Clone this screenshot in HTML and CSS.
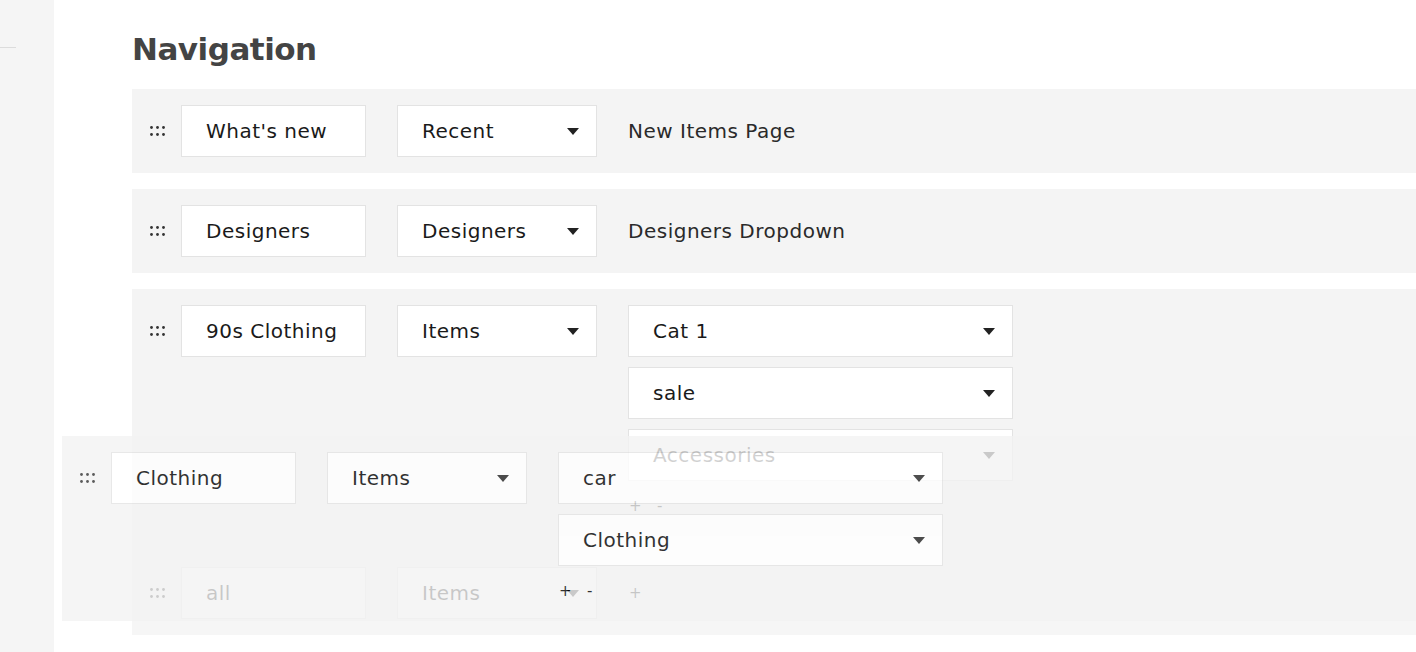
FILE: index.html
```html
<!DOCTYPE html>
<html lang="en">
<head>
<meta charset="utf-8">
<title>Navigation</title>
<link rel="stylesheet" href="styles.css">
</head>
<body>
<div class="app">
  <aside class="sidebar"><div class="divider"></div></aside>
  <main class="main">
    <h1 class="title">Navigation</h1>
    <div class="list">
      <div class="row">
        <div class="handle"><svg width="15" height="10" viewBox="0 0 15 10"><g fill="#333"><circle cx="1.5" cy="1.5" r="1.4"/><circle cx="7.5" cy="1.5" r="1.4"/><circle cx="13.5" cy="1.5" r="1.4"/><circle cx="1.5" cy="8.5" r="1.4"/><circle cx="7.5" cy="8.5" r="1.4"/><circle cx="13.5" cy="8.5" r="1.4"/></g></svg></div>
        <div class="field text">What's new</div>
        <div class="field select">Recent<span class="caret"></span></div>
        <div class="target">New Items Page</div>
      </div>
      <div class="row">
        <div class="handle"><svg width="15" height="10" viewBox="0 0 15 10"><g fill="#333"><circle cx="1.5" cy="1.5" r="1.4"/><circle cx="7.5" cy="1.5" r="1.4"/><circle cx="13.5" cy="1.5" r="1.4"/><circle cx="1.5" cy="8.5" r="1.4"/><circle cx="7.5" cy="8.5" r="1.4"/><circle cx="13.5" cy="8.5" r="1.4"/></g></svg></div>
        <div class="field text">Designers</div>
        <div class="field select">Designers<span class="caret"></span></div>
        <div class="target">Designers Dropdown</div>
      </div>
      <div class="row row-last">
        <div class="handle"><svg width="15" height="10" viewBox="0 0 15 10"><g fill="#333"><circle cx="1.5" cy="1.5" r="1.4"/><circle cx="7.5" cy="1.5" r="1.4"/><circle cx="13.5" cy="1.5" r="1.4"/><circle cx="1.5" cy="8.5" r="1.4"/><circle cx="7.5" cy="8.5" r="1.4"/><circle cx="13.5" cy="8.5" r="1.4"/></g></svg></div>
        <div class="field text">90s Clothing</div>
        <div class="field select">Items<span class="caret"></span></div>
        <div class="subs">
          <div class="field select wide">Cat 1<span class="caret"></span></div>
          <div class="field select wide">sale<span class="caret"></span></div>
          <div class="field select wide">Accessories<span class="caret"></span></div>
          <div class="pm"><span class="plus">+</span><span class="minus">-</span></div>
        </div>
      </div>
      <div class="row row-ghost">
        <div class="handle"><svg width="15" height="10" viewBox="0 0 15 10"><g fill="#333"><circle cx="1.5" cy="1.5" r="1.4"/><circle cx="7.5" cy="1.5" r="1.4"/><circle cx="13.5" cy="1.5" r="1.4"/><circle cx="1.5" cy="8.5" r="1.4"/><circle cx="7.5" cy="8.5" r="1.4"/><circle cx="13.5" cy="8.5" r="1.4"/></g></svg></div>
        <div class="field text">all</div>
        <div class="field select">Items<span class="caret"></span></div>
        <div class="subs">
          <div class="pm pm-inline"><span class="plus">+</span></div>
        </div>
      </div>
    </div>
  </main>

  <div class="row drag-clone">
    <div class="handle"><svg width="15" height="10" viewBox="0 0 15 10"><g fill="#333"><circle cx="1.5" cy="1.5" r="1.4"/><circle cx="7.5" cy="1.5" r="1.4"/><circle cx="13.5" cy="1.5" r="1.4"/><circle cx="1.5" cy="8.5" r="1.4"/><circle cx="7.5" cy="8.5" r="1.4"/><circle cx="13.5" cy="8.5" r="1.4"/></g></svg></div>
    <div class="field text">Clothing</div>
    <div class="field select">Items<span class="caret"></span></div>
    <div class="subs">
      <div class="field select wide">car<span class="caret"></span></div>
      <div class="field select wide">Clothing<span class="caret"></span></div>
      <div class="pm"><span class="plus">+</span><span class="minus">-</span></div>
    </div>
  </div>
</div>
</body>
</html>
```

FILE: styles.css
```css
* { box-sizing: border-box; }

html, body {
  margin: 0;
  padding: 0;
  background: #fff;
}

body {
  font-family: "DejaVu Sans", "Liberation Sans", sans-serif;
  color: #1a1a1a;
}

.app {
  position: relative;
  display: flex;
  height: 652px;
  overflow: hidden;
}

.sidebar {
  width: 54px;
  flex: none;
  background: #f5f5f5;
  padding-top: 47px;
}

.divider {
  width: 16px;
  height: 1px;
  background: #dcdcdc;
}

.main {
  flex: 1;
  padding: 29px 0 0 78px;
}

.title {
  margin: 0 0 20px;
  font-size: 31px;
  line-height: 40px;
  font-weight: bold;
  letter-spacing: -0.5px;
  color: #444;
}

.list {
  display: flex;
  flex-direction: column;
}

.row {
  display: flex;
  align-items: flex-start;
  background: #f4f4f4;
  padding: 16px 0;
  margin-bottom: 16px;
}

.row-last {
  margin-bottom: 0;
}

.row-ghost {
  background: #f6f6f6;
  padding-top: 31px;
  margin-bottom: 0;
}

.handle {
  width: 49px;
  height: 52px;
  flex: none;
  display: flex;
  align-items: center;
  justify-content: center;
  padding-left: 1px;
}

.handle svg { display: block; }

.field {
  height: 52px;
  border: 1px solid #e3e3e3;
  background: #fff;
  padding: 0 24px;
  display: flex;
  align-items: center;
  font-size: 20px;
  letter-spacing: 0.5px;
  color: #1a1a1a;
  white-space: nowrap;
  flex: none;
}

.text {
  width: 185px;
  margin-right: 31px;
}

.select {
  width: 200px;
  margin-right: 31px;
  position: relative;
}

.select.wide {
  width: 385px;
  margin-right: 0;
}

.caret {
  position: absolute;
  right: 17px;
  top: 22px;
  width: 0;
  height: 0;
  border-left: 6px solid transparent;
  border-right: 6px solid transparent;
  border-top: 7px solid #222;
}

.target {
  height: 52px;
  line-height: 52px;
  font-size: 20px;
  letter-spacing: 0.5px;
  color: #2a2a2a;
}

.subs {
  display: flex;
  flex-direction: column;
  align-items: flex-start;
  gap: 10px;
}

.pm {
  height: 28px;
  margin-top: 1px;
  display: flex;
  align-items: center;
  font-size: 15px;
  color: #111;
  padding-left: 1px;
}

.pm-inline {
  margin-top: 0;
  height: 52px;
}

.pm .plus {
  width: 28px;
}

.pm .minus {
  width: 12px;
}

.drag-clone {
  position: absolute;
  left: 62px;
  top: 436px;
  width: 1400px;
  margin: 0;
  background: #f3f3f3;
  opacity: 0.8;
}

.drag-clone .field {
  color: #000;
}

.drag-clone .pm {
  color: #000;
}
```
